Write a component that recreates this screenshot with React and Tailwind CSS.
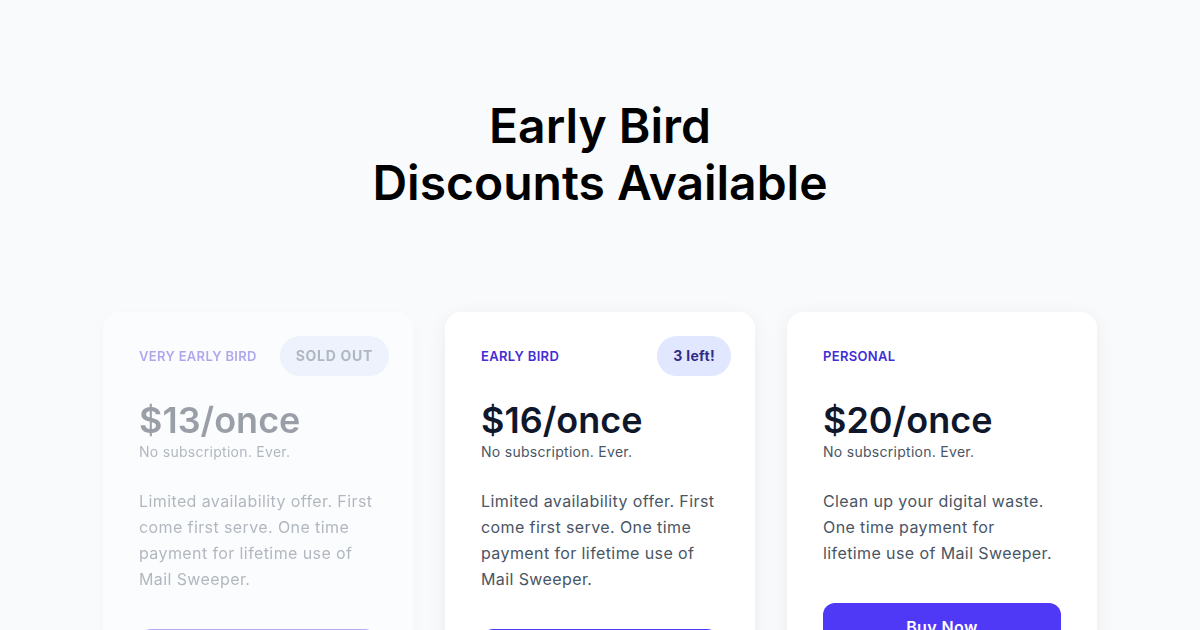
import React from 'react';

const plans = [
    {
        name: 'Very Early Bird',
        price: '$13',
        badge: 'SOLD OUT',
        soldOut: true,
        description: ['Limited availability offer. First', 'come first serve. One time', 'payment for lifetime use of', 'Mail Sweeper.'],
    },
    {
        name: 'Early Bird',
        price: '$16',
        badge: '3 left!',
        description: ['Limited availability offer. First', 'come first serve. One time', 'payment for lifetime use of', 'Mail Sweeper.'],
    },
    {
        name: 'Personal',
        price: '$20',
        description: ['Clean up your digital waste.', 'One time payment for', 'lifetime use of Mail Sweeper.'],
    },
];

const PlanCard = ({ plan }) => (
    <div className={`w-[310px] bg-white rounded-2xl shadow-[0_4px_20px_rgba(15,23,42,0.06)] p-9 ${plan.soldOut ? 'opacity-40 blur-[0.5px]' : ''}`}>
        <div className="flex items-center justify-between h-4">
            <span className="text-[13px] leading-4 font-semibold uppercase tracking-wide text-indigo-700">{plan.name}</span>
            {plan.badge && (
                <span className={`-mr-3 px-4 py-2.5 rounded-full text-sm leading-5 font-bold bg-indigo-100 ${plan.soldOut ? 'text-slate-600 tracking-wider' : 'text-indigo-900 tracking-wide'}`}>
                    {plan.badge}
                </span>
            )}
        </div>

        <p className="mt-9 text-4xl leading-10 font-semibold text-slate-900">{plan.price}/once</p>
        <p className="mt-0.5 text-sm leading-5 text-gray-600 tracking-[0.02em]">No subscription. Ever.</p>

        <p className="mt-[26px] text-base leading-[26px] text-gray-600 tracking-wide">
            {plan.description.map((line, i) => (
                <span key={i} className="block">{line}</span>
            ))}
        </p>

        <button className="mt-[37px] w-full h-12 rounded-xl bg-indigo-600 text-white font-semibold tracking-wide">
            Buy Now
        </button>
    </div>
);

export default function App() {
    return (
        <div className="min-h-screen bg-slate-50 pt-[97px] font-['Inter',sans-serif]">
            <h1 className="text-center text-5xl leading-[57px] font-semibold text-black">
                Early Bird
                <br />
                Discounts Available
            </h1>

            <div className="mt-[101px] flex justify-center items-start gap-8">
                {plans.map((plan) => (
                    <PlanCard key={plan.name} plan={plan} />
                ))}
            </div>
        </div>
    );
}
